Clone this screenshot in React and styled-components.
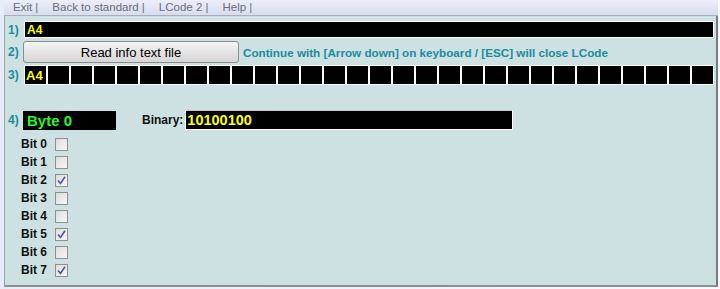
import styled, { createGlobalStyle } from "styled-components";

const GlobalStyle = createGlobalStyle`
  html, body {
    margin: 0;
    padding: 0;
    background: #f4f7fc;
  }
  body {
    font-family: "Liberation Sans", Arial, sans-serif;
  }
`;

const TEAL = "#1b8e9a";

const Page = styled.div`
  width: 720px;
  height: 289px;
  display: flex;
  padding-left: 4px;
  box-sizing: border-box;
  background: linear-gradient(90deg, #e4edf8, #f6f9fd);
  overflow: hidden;
`;

const Frame = styled.div`
  width: 714px;
  display: flex;
  flex-direction: column;
`;

const MenuBar = styled.div`
  height: 15px;
  display: flex;
  align-items: center;
  gap: 14px;
  padding-left: 9px;
  background: linear-gradient(#eceef8, #d9dcef);
  border-bottom: 1px solid #a9b0bd;
  font-family: "Liberation Sans", Arial, sans-serif;
  font-size: 11.5px;
  color: #6c6e80;
  line-height: 15px;
`;

const MenuItem = styled.span`
  white-space: pre;
`;

const Panel = styled.div`
  height: 271px;
  box-sizing: border-box;
  background: #cde0e2;
  border-left: 1px solid #9aa5a8;
  border-right: 2px solid #767b7d;
  border-bottom: 2px solid #8a8f91;
  padding: 5px 2px 0 0;
  display: flex;
  flex-direction: column;
`;

const Row = styled.div`
  display: flex;
  align-items: center;
  height: ${(p) => p.$h}px;
  margin-top: ${(p) => p.$mt || 0}px;
`;

const Num = styled.span`
  width: 19px;
  padding-left: 3px;
  box-sizing: border-box;
  font-size: 12px;
  font-weight: bold;
  color: ${TEAL};
  flex-shrink: 0;
`;

const Field = styled.div`
  flex: 1;
  height: 100%;
  box-sizing: border-box;
  background: #000;
  border: 1px solid #fff;
  color: #ffff00;
  font-weight: bold;
  font-size: 12px;
  display: flex;
  align-items: center;
  padding-left: 2px;
`;

const Button = styled.button`
  margin-left: -1px;
  width: 216px;
  height: 22px;
  border: 1px solid #8c8c8c;
  border-radius: 3px;
  background: linear-gradient(#f6f6f6, #e4e4e4 50%, #d6d6d6);
  font-family: "Liberation Sans", Arial, sans-serif;
  font-size: 13px;
  color: #000;
  padding: 0;
`;

const Hint = styled.span`
  margin-left: 4px;
  font-size: 11.7px;
  font-weight: bold;
  color: ${TEAL};
  white-space: nowrap;
`;

const Cells = styled.div`
  flex: 1;
  height: 100%;
  display: grid;
  grid-template-columns: repeat(30, 1fr);
`;

const Cell = styled.div`
  background: #000;
  border: 1px solid #fff;
  color: #ffff00;
  font-weight: bold;
  font-size: 13px;
  display: flex;
  align-items: center;
  padding-left: 1px;
`;

const ByteBox = styled.div`
  margin-left: -1px;
  width: 93px;
  height: 19px;
  background: #000;
  color: #2af52a;
  font-size: 15px;
  font-weight: bold;
  display: flex;
  align-items: center;
  padding-left: 4px;
  box-sizing: border-box;
`;

const Label = styled.span`
  font-size: 12px;
  font-weight: bold;
  color: #111;
  margin-left: ${(p) => p.$ml || 0}px;
`;

const BinaryBox = styled.div`
  margin-left: 2px;
  width: 328px;
  height: 20px;
  box-sizing: border-box;
  background: #000;
  border: 1px solid #fff;
  border-top-color: #c8c8c8;
  color: #ffff00;
  font-size: 14.5px;
  font-weight: bold;
  display: flex;
  align-items: center;
  padding-left: 1px;
`;

const BitList = styled.div`
  display: flex;
  flex-direction: column;
  margin-top: 5px;
  padding-left: 16px;
`;

const BitRow = styled.div`
  height: 18px;
  display: flex;
  align-items: center;
`;

const BitName = styled.span`
  width: 34px;
  font-size: 12px;
  font-weight: bold;
  color: #111;
`;

const Box = styled.span`
  width: 13px;
  height: 13px;
  box-sizing: border-box;
  border: 1px solid #8e8f8f;
  background: linear-gradient(135deg, #dcdcdc, #f7f7f7);
  display: flex;
  align-items: center;
  justify-content: center;
`;

function Check({ on }) {
  return (
    <Box>
      {on && (
        <svg width="9" height="9" viewBox="0 0 9 9">
          <path d="M1 4.5 L3.5 7.5 L8 0.8" fill="none" stroke="#4b5a9c" strokeWidth="1.6" />
        </svg>
      )}
    </Box>
  );
}

const bits = [false, false, true, false, false, true, false, true];

export default function App() {
  return (
    <>
      <GlobalStyle />
      <Page>
        <Frame>
          <MenuBar>
            <MenuItem>Exit |</MenuItem>
            <MenuItem>Back to standard |</MenuItem>
            <MenuItem>LCode 2 |</MenuItem>
            <MenuItem>Help |</MenuItem>
          </MenuBar>
          <Panel>
            <Row $h={17}>
              <Num>1)</Num>
              <Field>A4</Field>
            </Row>
            <Row $h={22} $mt={3}>
              <Num>2)</Num>
              <Button>Read info text file</Button>
              <Hint>Continue with [Arrow down] on keyboard / [ESC] will close LCode</Hint>
            </Row>
            <Row $h={20} $mt={2}>
              <Num>3)</Num>
              <Cells>
                {Array.from({ length: 30 }, (_, i) => (
                  <Cell key={i}>{i === 0 ? "A4" : ""}</Cell>
                ))}
              </Cells>
            </Row>
            <Row $h={20} $mt={25}>
              <Num>4)</Num>
              <ByteBox>Byte 0</ByteBox>
              <Label $ml={26}>Binary:</Label>
              <BinaryBox>10100100</BinaryBox>
            </Row>
            <BitList>
              {bits.map((on, i) => (
                <BitRow key={i}>
                  <BitName>Bit {i}</BitName>
                  <Check on={on} />
                </BitRow>
              ))}
            </BitList>
          </Panel>
        </Frame>
      </Page>
    </>
  );
}
